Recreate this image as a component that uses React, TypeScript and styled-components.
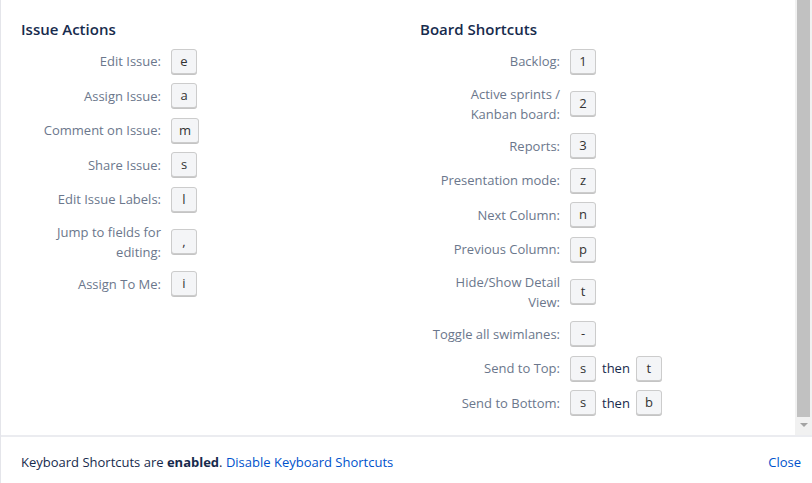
import React from 'react';
import styled, { createGlobalStyle } from 'styled-components';

const GlobalStyle = createGlobalStyle`
  html, body {
    margin: 0;
    padding: 0;
    background: #fff;
  }
  body {
    font-family: 'Open Sans', 'Liberation Sans', sans-serif;
    font-size: 13px;
    color: #172b4d;
  }
`;

type Shortcut = {
  label: string;
  keys: string[];
};

const issueActions: Shortcut[] = [
  { label: 'Edit Issue:', keys: ['e'] },
  { label: 'Assign Issue:', keys: ['a'] },
  { label: 'Comment on Issue:', keys: ['m'] },
  { label: 'Share Issue:', keys: ['s'] },
  { label: 'Edit Issue Labels:', keys: ['l'] },
  { label: 'Jump to fields for editing:', keys: [','] },
  { label: 'Assign To Me:', keys: ['i'] },
];

const boardShortcuts: Shortcut[] = [
  { label: 'Backlog:', keys: ['1'] },
  { label: 'Active sprints / Kanban board:', keys: ['2'] },
  { label: 'Reports:', keys: ['3'] },
  { label: 'Presentation mode:', keys: ['z'] },
  { label: 'Next Column:', keys: ['n'] },
  { label: 'Previous Column:', keys: ['p'] },
  { label: 'Hide/Show Detail View:', keys: ['t'] },
  { label: 'Toggle all swimlanes:', keys: ['-'] },
  { label: 'Send to Top:', keys: ['s', 't'] },
  { label: 'Send to Bottom:', keys: ['s', 'b'] },
];

const ShortcutGroup = ({ title, items }: { title: string; items: Shortcut[] }) => {
  return (
    <Group>
      <GroupTitle>{title}</GroupTitle>
      <List>
        {items.map((item) => (
          <Row key={item.label}>
            <Label>{item.label}</Label>
            <Keys>
              {item.keys.map((k, index) => (
                <React.Fragment key={index}>
                  {index > 0 && <Then>then</Then>}
                  <Key>{k}</Key>
                </React.Fragment>
              ))}
            </Keys>
          </Row>
        ))}
      </List>
    </Group>
  );
};

const App = () => {
  return (
    <>
      <GlobalStyle />
      <Dialog>
        <Body>
          <Content>
            <ShortcutGroup title="Issue Actions" items={issueActions} />
            <ShortcutGroup title="Board Shortcuts" items={boardShortcuts} />
          </Content>
          <Scrollbar>
            <Thumb />
            <ArrowDown />
          </Scrollbar>
        </Body>
        <Footer>
          <FooterText>
            Keyboard Shortcuts are <strong>enabled</strong>.{' '}
            <Link href="#">Disable Keyboard Shortcuts</Link>
          </FooterText>
          <Link href="#">Close</Link>
        </Footer>
      </Dialog>
    </>
  );
};

const Dialog = styled.div`
  width: 812px;
  height: 483px;
  box-sizing: border-box;
  border-left: 1px solid #e4e5ea;
  display: flex;
  flex-direction: column;
  overflow: hidden;
`;

const Body = styled.div`
  height: 435px;
  display: flex;
  border-bottom: 2px solid #ebecf0;
`;

const Content = styled.div`
  flex: 1;
  display: grid;
  grid-template-columns: 399px 1fr;
  align-items: start;
  padding: 19px 0 0 20px;
`;

const Group = styled.section`
  display: flex;
  flex-direction: column;
`;

const GroupTitle = styled.h3`
  margin: 0 0 5px;
  font-size: 15px;
  line-height: 20px;
  font-weight: 600;
  color: #172b4d;
`;

const List = styled.div`
  display: flex;
  flex-direction: column;
`;

const Row = styled.div`
  display: grid;
  grid-template-columns: 140px auto;
  column-gap: 10px;
  align-items: center;
  padding: 5px 0;
`;

const Label = styled.div`
  padding-left: 5px;
  text-align: right;
  line-height: 20px;
  color: #6b778c;
`;

const Keys = styled.div`
  height: 24.5px;
  display: flex;
  align-items: center;
  gap: 6px;
`;

const Key = styled.kbd`
  flex: none;
  display: inline-block;
  min-width: 10px;
  height: 23px;
  padding: 0 7px;
  line-height: 23px;
  text-align: center;
  font-family: 'Open Sans', 'Liberation Sans', sans-serif;
  font-size: 13px;
  color: #333;
  background: #f4f5f7;
  border: 1px solid #ccc;
  border-radius: 3px;
  box-shadow: 0 1px 0 #c4c4c4;
`;

const Then = styled.span`
  color: #172b4d;
  line-height: 20px;
`;

const Scrollbar = styled.div`
  width: 17px;
  background: #f1f1f1;
  display: flex;
  flex-direction: column;
  align-items: center;
`;

const Thumb = styled.div`
  width: 13px;
  height: 417px;
  background: #c1c1c1;
`;

const ArrowDown = styled.div`
  margin-top: 6px;
  width: 0;
  height: 0;
  border-left: 4px solid transparent;
  border-right: 4px solid transparent;
  border-top: 4px solid #a3a3a3;
`;

const Footer = styled.footer`
  flex: 1;
  display: flex;
  align-items: center;
  justify-content: space-between;
  padding: 4px 11px 0 20px;
`;

const FooterText = styled.div`
  color: #172b4d;
  strong {
    font-weight: 700;
  }
`;

const Link = styled.a`
  color: #0052cc;
  text-decoration: none;
`;

export default App;
